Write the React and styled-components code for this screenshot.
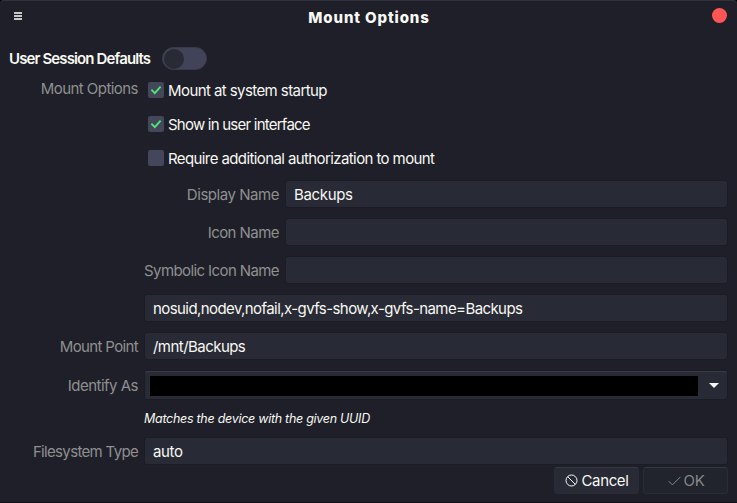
import React from "react";
import styled, { createGlobalStyle } from "styled-components";

const GlobalStyle = createGlobalStyle`
  * { box-sizing: border-box; }
  body { margin: 0; background: #000; }
`;

const Window = styled.main`
  width: 737px;
  height: 503px;
  overflow: hidden;
  border-radius: 4px 4px 0 0;
  background: #1e1f29;
  box-shadow: inset 0 1px #30313b, inset 0 -1px #14151b;
  color: #f8f8f2;
  font-family: Inter, sans-serif;
  font-size: 15px;
  letter-spacing: -0.35px;
  line-height: 20px;
  white-space: nowrap;
`;

const TitleBar = styled.header`
  display: grid;
  grid-template-columns: 30px 1fr 30px;
  align-items: center;
  height: 35px;
  padding: 0 2px 0 5px;
`;

const MenuIcon = styled.svg`
  display: block;
  width: 8px;
  height: 8px;
  margin: -3px 0 0 9px;
`;

const Title = styled.h1`
  margin: 0 0 0 -2px;
  font-size: 15px;
  font-weight: 800;
  letter-spacing: 0.87px;
  text-align: center;
`;

const CloseButton = styled.button`
  width: 15px;
  height: 15px;
  margin: -4px 0 0 7px;
  padding: 0;
  border: 0;
  border-radius: 50%;
  background: #ff5555;
`;

const DefaultsRow = styled.div`
  display: flex;
  align-items: center;
  gap: 11px;
  height: 23px;
  margin: 12px 0 0 9px;
`;

const DefaultsLabel = styled.span`
  width: 142px;
  font-weight: 600;
  letter-spacing: -0.88px;
`;

const Switch = styled.button`
  display: flex;
  width: 45px;
  height: 23px;
  padding: 1px;
  border: 1px solid #393b4c;
  border-radius: 12px;
  background: #414458;
`;

const SwitchKnob = styled.span`
  width: 20px;
  height: 20px;
  margin: -0.5px 0 0 -0.5px;
  border-radius: 50%;
  background: #282a36;
`;

const Form = styled.div`
  display: flex;
  flex-direction: column;
  gap: 12px;
  margin-top: 10px;
`;

const CheckSection = styled.div`
  display: grid;
  grid-template-columns: 138px 1fr;
  column-gap: 10px;
  height: 89px;
`;

const Label = styled.span`
  margin-top: ${(p) => p.$shift || 0}px;
  color: #8f908f;
  letter-spacing: ${(p) => p.$tracking || -0.55}px;
  text-align: right;
`;

const CheckList = styled.div`
  display: flex;
  flex-direction: column;
  gap: 14px;
`;

const CheckItem = styled.label`
  display: flex;
  align-items: center;
  gap: 4px;
  height: 20px;
`;

const CheckText = styled.span`
  margin-top: 2px;
  letter-spacing: ${(p) => p.$tracking}px;
`;

const CheckBox = styled.span`
  display: flex;
  width: 16px;
  height: 16px;
  border-radius: 2px;
  background: #44475a;
`;

const FieldRow = styled.div`
  display: grid;
  grid-template-columns: ${(p) => (p.$nested ? "279px 441px" : "138px 582px")};
  column-gap: 7px;
  align-items: center;
  height: ${(p) => p.$height || 26}px;
`;

const Input = styled.input`
  grid-column: 2;
  width: 100%;
  height: 26px;
  padding: 0 8px;
  border: 0;
  border-radius: 2px;
  outline: 0;
  background: #282a36;
  box-shadow: 0 0 0 1px #1b1c25;
  color: inherit;
  font: inherit;
  letter-spacing: ${(p) => p.$tracking || -0.35}px;
`;

const Combo = styled.div`
  display: flex;
  align-items: center;
  height: 28px;
  padding: 1px 8px 0 5px;
  border-radius: 2px;
  background: #282a36;
  box-shadow: inset 0 1px #3a3c47, 0 0 0 1px #1b1c25;
`;

const Redacted = styled.span`
  width: 548px;
  height: 20px;
  margin-right: 11px;
  background: #000;
`;

const Arrow = styled.svg`
  width: 10px;
  height: 5px;
  margin-top: -1px;
`;

const Hint = styled.p`
  height: 15px;
  margin: 0 0 0 144px;
  font-size: 12.5px;
  font-style: italic;
  line-height: 15px;
  letter-spacing: -0.28px;
`;

const Actions = styled.footer`
  display: flex;
  justify-content: flex-end;
  gap: 4px;
  margin: 3px 9px 0 0;
`;

const ActionButton = styled.button`
  display: flex;
  align-items: center;
  justify-content: center;
  gap: 3px;
  width: 85px;
  height: 27px;
  padding: 0 0 0 1px;
  border: 1px solid #292b35;
  border-top-color: #353741;
  border-radius: 3px;
  background: ${(p) => (p.disabled ? "#21232d" : "#282a36")};
  color: ${(p) => (p.disabled ? "#858785" : "#f8f8f2")};
  font: inherit;
  letter-spacing: inherit;
`;

const Glyph = styled.svg`
  width: 13px;
  height: 13px;
  fill: none;
  stroke: currentColor;
`;

function Check({ checked, tracking, children }) {
  return (
    <CheckItem>
      <CheckBox role="checkbox" aria-checked={checked}>
        {checked && (
          <svg width="16" height="16" viewBox="0 0 16 16">
            <path d="M3.4 7.7 6.8 11.1 12.6 4.6" fill="none" stroke="#50fa7b" strokeOpacity="0.9" strokeWidth="1.8" />
          </svg>
        )}
      </CheckBox>
      <CheckText $tracking={tracking}>{children}</CheckText>
    </CheckItem>
  );
}

function Field({ label, value, nested, labelTracking, tracking }) {
  return (
    <FieldRow $nested={nested}>
      {label && (
        <Label $shift={1} $tracking={labelTracking}>
          {label}
        </Label>
      )}
      <Input defaultValue={value} aria-label={label || "Options"} $tracking={tracking} />
    </FieldRow>
  );
}

export default function App() {
  return (
    <>
      <GlobalStyle />
      <Window>
        <TitleBar>
          <MenuIcon viewBox="0 0 8 8" fill="#c8c8c7">
            <path d="M0 0h8v2H0zM0 3h8v2H0zM0 6h8v2H0z" />
          </MenuIcon>
          <Title>Mount Options</Title>
          <CloseButton aria-label="Close" />
        </TitleBar>
        <DefaultsRow>
          <DefaultsLabel>User Session Defaults</DefaultsLabel>
          <Switch role="switch" aria-checked="false" aria-label="User Session Defaults">
            <SwitchKnob />
          </Switch>
        </DefaultsRow>
        <Form>
          <CheckSection>
            <Label $shift={-1}>Mount Options</Label>
            <CheckList>
              <Check checked tracking={-0.58}>Mount at system startup</Check>
              <Check checked tracking={-0.77}>Show in user interface</Check>
              <Check checked={false} tracking={-0.6}>Require additional authorization to mount</Check>
            </CheckList>
          </CheckSection>
          <Field nested label="Display Name" labelTracking={-0.46} value="Backups" />
          <Field nested label="Icon Name" value="" />
          <Field nested label="Symbolic Icon Name" labelTracking={-0.6} value="" />
          <Field value="nosuid,nodev,nofail,x-gvfs-show,x-gvfs-name=Backups" tracking={-0.58} />
          <Field label="Mount Point" labelTracking={-0.64} value="/mnt/Backups" tracking={-0.54} />
          <FieldRow $height={28}>
            <Label $shift={1} $tracking={-0.5}>Identify As</Label>
            <Combo>
              <Redacted />
              <Arrow viewBox="0 0 10 5">
                <path d="M0 0h10L5 5z" fill="#f8f8f2" />
              </Arrow>
            </Combo>
          </FieldRow>
          <Hint>Matches the device with the given UUID</Hint>
          <Field label="Filesystem Type" labelTracking={-0.67} value="auto" />
        </Form>
        <Actions>
          <ActionButton>
            <Glyph viewBox="0 0 13 13">
              <circle cx="6.5" cy="6.5" r="5.5" />
              <path d="m2.7 2.7 7.6 7.6" />
            </Glyph>
            Cancel
          </ActionButton>
          <ActionButton disabled>
            <Glyph viewBox="0 0 13 13">
              <path d="m.7 7.2 3.7 3.7 8-8" />
            </Glyph>
            OK
          </ActionButton>
        </Actions>
      </Window>
    </>
  );
}
